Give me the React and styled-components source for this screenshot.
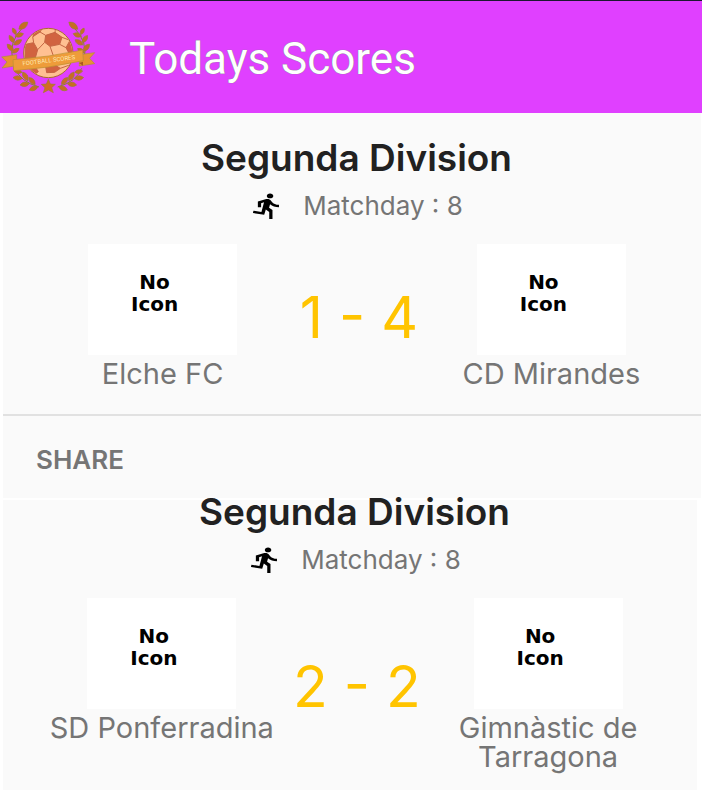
import React from "react";
import styled, { createGlobalStyle } from "styled-components";

const GlobalStyle = createGlobalStyle`
  * { box-sizing: border-box; }
  body { margin: 0; background: #ffffff; font-family: Inter, Roboto, sans-serif; }
`;

const Header = styled.header`
  display: flex;
  align-items: center;
  gap: 33px;
  height: 113px;
  border-top: 1px solid #1d1830;
  background: #e040ff;
`;

const Logo = styled.svg`
  flex: none;
  width: 96px;
  height: 76px;
`;

const Title = styled.h1`
  margin: 0;
  padding-top: 4px;
  font: 400 44px/52px Roboto, sans-serif;
  color: #ffffff;
  text-shadow: 0 0 1px #4caf50;
`;

const Feed = styled.main`
  display: flex;
  flex-direction: column;
  gap: 2px;
`;

const Card = styled.article`
  margin: 0 ${(p) => (p.$clipped ? 5 : 1)}px 0 3px;
  padding-top: ${(p) => (p.$clipped ? 0 : 33)}px;
  background: #fafafa;
`;

const League = styled.h2`
  margin: 0 0 20px;
  padding-left: 9px;
  font-size: 37px;
  font-weight: 600;
  line-height: 24px;
  text-align: center;
  color: #212121;
`;

const Matchday = styled.p`
  display: flex;
  align-items: center;
  justify-content: center;
  gap: 24px;
  margin: 0 0 22px;
  padding-left: 12px;
  font-size: 26px;
  line-height: 32px;
  color: #757575;
`;

const Runner = styled.svg`
  width: 26px;
  height: 26px;
`;

const Fixture = styled.div`
  display: grid;
  grid-template-columns: 8fr 5fr 8fr;
  align-items: center;
  padding: 0 30px 26px 40px;
`;

const Team = styled.div`
  display: flex;
  flex-direction: column;
  align-items: center;
  align-self: start;
  gap: 4px;
`;

const Crest = styled.div`
  display: flex;
  align-items: center;
  justify-content: center;
  width: 149px;
  height: 111px;
  padding: 0 16px 14px 0;
  background: #ffffff;
  font: 700 20px/22px "DejaVu Sans", sans-serif;
  text-align: center;
  color: #000000;
`;

const TeamName = styled.span`
  font-size: 29px;
  line-height: 29px;
  text-align: center;
  color: #757575;
`;

const Score = styled.strong`
  padding: 4px 0 0 4px;
  font-size: 57px;
  font-weight: 400;
  line-height: 64px;
  text-align: center;
  white-space: nowrap;
  color: #ffc400;
`;

const Actions = styled.footer`
  display: flex;
  align-items: center;
  height: 84px;
  padding: 6px 33px 0;
  border-top: 2px solid #e1e1e1;
`;

const ShareButton = styled.button`
  padding: 0;
  border: 0;
  background: none;
  font: 600 26px/32px Inter, Roboto, sans-serif;
  color: #757575;
  cursor: pointer;
`;

const leaves = [
  [70, 76, -38, 17],
  [43, 93, 62, 11], [58, 104, -18, 13],
  [35, 116, 55, 13], [53, 126, -32, 14],
  [31, 142, 48, 14], [47, 151, -32, 12],
  [54, 214, 8, 12], [53, 233, 5, 14], [76, 228, 58, 15],
  [74, 252, -8, 14], [96, 242, 48, 14], [101, 264, -22, 14],
];

function Laurel() {
  return (
    <g>
      <path d="M68 82Q25 125 38 178M45 204Q61 244 117 260" fill="none" stroke="#8b8231" strokeWidth="3" />
      {leaves.map(([x, y, angle, r]) => (
        <path
          key={`${x}-${y}`}
          d={`M${-r} 0Q0 ${-r * 0.95} ${r} 0Q0 ${r * 0.95} ${-r} 0Z`}
          transform={`translate(${x} ${y}) rotate(${angle})`}
          fill="#c96c22"
          stroke="#968331"
          strokeWidth="2"
        />
      ))}
    </g>
  );
}

function FootballLogo() {
  return (
    <Logo viewBox="0 56 288 228" role="img" aria-label="Football Scores">
      <Laurel />
      <g transform="translate(290 0) scale(-1 1)"><Laurel /></g>
      <path d="M145 237l6 14 15 1-11 10 5 15-15-8-15 8 5-15-11-10 15-1Z" fill="#d36b25" stroke="#968331" strokeWidth="2" />
      <clipPath id="ball"><circle cx="145" cy="158" r="72" /></clipPath>
      <circle cx="145" cy="158" r="74" fill="#ffc092" stroke="#a96b32" strokeWidth="3" />
      <g clipPath="url(#ball)" fill="#d16340" stroke="#c46543" strokeWidth="3">
        <path d="M137 105l28-9 21 15-7 21-29 6-16-12Z" />
        <path d="M76 132l25-5 12 21-8 28-30 1Z" />
        <path d="M210 120l16 28-12 24-16-30Z" />
        <path d="M102 91l27-10-9 14-21 14Z" />
        <path d="M137 199l26-6 18 11-17 12-24 1Z" />
        <path d="M80 190l20 0 15 24-10 8Z" />
        <path d="M137 105l-17-10M165 96l2-14M186 111l24 9M179 132l19 10M134 126l-21 22M101 127l-3-18M150 138l12 34M105 176l32 23M181 204l28-10" fill="none" />
      </g>
      <path d="M5 170l45-7v33l-44 7 15-18ZM238 163l46-6-15 17 15 16-46 7Z" fill="#e99132" stroke="#a99237" strokeWidth="2" />
      <path d="M40 198v12l12-14ZM249 184v12l-12-8Z" fill="#a95821" />
      <path d="M39 178Q145 171 248 149L250 181Q145 204 41 211Z" fill="#ee9c3a" stroke="#b89034" strokeWidth="2" />
      <text x="147" y="186" transform="rotate(-7 147 186)" textAnchor="middle" fontFamily="Roboto, sans-serif" fontSize="18" fill="#ffe9b5">
        FOOTBALL SCORES
      </text>
    </Logo>
  );
}

function RunnerIcon() {
  return (
    <Runner viewBox="3 1 16 22" preserveAspectRatio="none" aria-hidden="true">
      <path fill="#000" d="M13.49 5.48c1.1 0 2-.9 2-2s-.9-2-2-2-2 .9-2 2 .9 2 2 2zm-3.6 13.9l1-4.4 2.1 2v6h2v-7.5l-2.1-2 .6-3c1.3 1.5 3.3 2.5 5.5 2.5v-2c-1.9 0-3.5-1-4.3-2.4l-1-1.6c-.4-.6-1-1-1.7-1-.3 0-.5.1-.8.1l-5.2 2.2v4.7h2v-3.4l1.8-.7-1.6 8.1-4.9-1-.4 2 7 1.4z" />
    </Runner>
  );
}

function TeamBlock({ name }) {
  return (
    <Team>
      <Crest>No<br />Icon</Crest>
      <TeamName>{name}</TeamName>
    </Team>
  );
}

function MatchCard({ home, away, score, clipped, shareable }) {
  return (
    <Card $clipped={clipped}>
      <League>Segunda Division</League>
      <Matchday><RunnerIcon />Matchday : 8</Matchday>
      <Fixture>
        <TeamBlock name={home} />
        <Score>{score}</Score>
        <TeamBlock name={away} />
      </Fixture>
      {shareable && <Actions><ShareButton type="button">SHARE</ShareButton></Actions>}
    </Card>
  );
}

export default function App() {
  return (
    <>
      <GlobalStyle />
      <Header>
        <FootballLogo />
        <Title>Todays Scores</Title>
      </Header>
      <Feed>
        <MatchCard home="Elche FC" away="CD Mirandes" score="1 - 4" shareable />
        <MatchCard home="SD Ponferradina" away="Gimnàstic de Tarragona" score="2 - 2" clipped />
      </Feed>
    </>
  );
}
